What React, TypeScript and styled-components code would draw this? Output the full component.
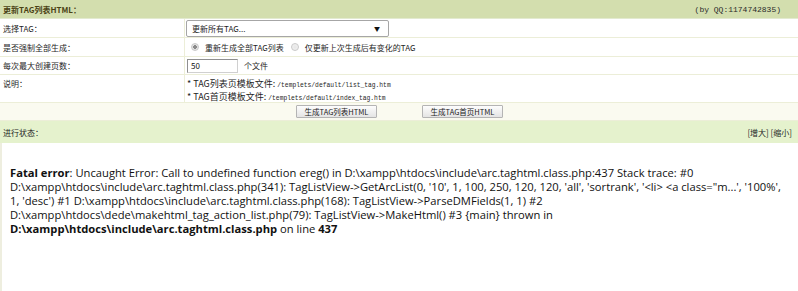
import React from "react";
import styled, { createGlobalStyle } from "styled-components";

const Global = createGlobalStyle`
  html, body { margin: 0; padding: 0; background: #ffffff; }
  body { font-family: "Noto Sans CJK SC", "Noto Sans", sans-serif; font-size: 8px; color: #1e1e1e; }
  * { box-sizing: border-box; }
`;

const Page = styled.div`
  width: 798px;
  height: 291px;
  display: flex;
  flex-direction: column;
  background: #fff;
  overflow: hidden;
`;

const TitleBar = styled.div`
  height: 19px;
  flex: 0 0 19px;
  display: flex;
  align-items: center;
  justify-content: space-between;
  padding: 0 17px 0 3px;
  background: #d3deae;
  border-bottom: 1px solid #e3ead0;
`;

const Title = styled.span`
  font-weight: bold;
  color: #4a4214;
  font-size: 8px;
`;

const Mono = styled.span<{ $size?: number }>`
  font-family: "Liberation Mono", "Noto Sans CJK SC", monospace;
  font-size: ${(p) => p.$size ?? 6.3}px;
`;

const ByLine = styled(Mono)`
  color: #2a2a2a;
`;

const FormRow = styled.div<{ $h: number }>`
  display: grid;
  grid-template-columns: 184px 1fr;
  height: ${(p) => p.$h}px;
  flex: 0 0 ${(p) => p.$h}px;
  border-bottom: 1px solid #eceed8;
`;

const LabelCell = styled.div<{ $top?: boolean }>`
  display: flex;
  align-items: ${(p) => (p.$top ? "flex-start" : "center")};
  padding: ${(p) => (p.$top ? "3px 3px 0" : "0 3px")};
  height: 100%;
`;

const ValueCell = styled.div<{ $top?: boolean }>`
  display: flex;
  flex-direction: ${(p) => (p.$top ? "column" : "row")};
  align-items: ${(p) => (p.$top ? "flex-start" : "center")};
  padding: ${(p) => (p.$top ? "2px 2px 0 2px" : "0 2px 0 1px")};
  height: 100%;
  border-left: 1px solid #eceed8;
`;

const FakeSelect = styled.div`
  width: 203px;
  height: 17px;
  border: 1px solid #a6a6a6;
  border-radius: 2px;
  display: flex;
  align-items: center;
  justify-content: space-between;
  padding: 0 8px 0 5px;
  background: #fff;
`;

const Arrow = styled.span`
  font-size: 6px;
  color: #111;
`;

const RadioGroup = styled.label`
  display: flex;
  align-items: center;
  gap: 6px;
  margin-left: 5px;
  margin-right: 2px;
`;

const Radio = styled.span<{ $checked?: boolean }>`
  width: 8px;
  height: 8px;
  border-radius: 50%;
  border: 1px solid #c9c9c9;
  background: radial-gradient(circle, ${(p) => (p.$checked ? "#8a8a8a 0 1.6px, #e2e2e2 2px" : "#e6e6e6 0, #f4f4f4 100%")});
  display: inline-block;
`;

const NumInput = styled.input`
  width: 51px;
  height: 14px;
  border: 1px solid #8f8f8f;
  border-right-color: #d0d0d0;
  border-bottom-color: #d0d0d0;
  padding: 0 3px;
  font-family: "Noto Sans CJK SC", sans-serif;
  font-size: 8px;
  color: #111;
  margin-left: 1px;
  outline: none;
`;

const Unit = styled.span`
  margin-left: 6px;
  color: #1e1e1e;
`;

const NoteLine = styled.div`
  height: 13px;
  line-height: 13px;
  font-size: 9px;
  color: #1e1e1e;
  white-space: nowrap;
`;

const ButtonRow = styled.div`
  height: 18px;
  flex: 0 0 18px;
  display: flex;
  justify-content: center;
  align-items: center;
  gap: 45px;
  padding-left: 1px;
  background: #fafaf0;
  border-bottom: 1px solid #eceed8;
`;

const Button = styled.button`
  width: 81px;
  height: 13px;
  padding: 0;
  border: 1px solid #b4b4b4;
  border-radius: 1px;
  background: linear-gradient(#fdfdfd, #e4e4e4);
  font-family: "Noto Sans CJK SC", sans-serif;
  font-size: 7.5px;
  color: #222;
  line-height: 11px;
`;

const StatusBar = styled.div`
  height: 22px;
  flex: 0 0 22px;
  display: flex;
  align-items: center;
  justify-content: space-between;
  padding: 0 6px 0 3px;
  background: #e5f2cd;
`;

const Output = styled.div`
  flex: 1;
  border-left: 2px solid #eeeedf;
  padding: 9px 8px;
  font-family: "Open Sans", "Noto Sans", sans-serif;
  font-size: 11.2px;
  line-height: 14px;
  color: #111;
  white-space: nowrap;
`;

export default function App() {
  return (
    <>
      <Global />
      <Page>
        <TitleBar>
          <Title>更新TAG列表HTML：</Title>
          <ByLine $size={8}>(by QQ:1174742835)</ByLine>
        </TitleBar>

        <FormRow $h={19}>
          <LabelCell>选择TAG：</LabelCell>
          <ValueCell>
            <FakeSelect>
              <span>更新所有TAG...</span>
              <Arrow>▼</Arrow>
            </FakeSelect>
          </ValueCell>
        </FormRow>

        <FormRow $h={19}>
          <LabelCell>是否强制全部生成：</LabelCell>
          <ValueCell>
            <RadioGroup>
              <Radio $checked />
              <span>重新生成全部TAG列表</span>
            </RadioGroup>
            <RadioGroup>
              <Radio />
              <span>仅更新上次生成后有变化的TAG</span>
            </RadioGroup>
          </ValueCell>
        </FormRow>

        <FormRow $h={18}>
          <LabelCell>每次最大创建页数：</LabelCell>
          <ValueCell>
            <NumInput defaultValue="50" />
            <Unit>个文件</Unit>
          </ValueCell>
        </FormRow>

        <FormRow $h={28}>
          <LabelCell $top>说明：</LabelCell>
          <ValueCell $top>
            <NoteLine>
              * TAG列表页模板文件: <Mono>/templets/default/list_tag.htm</Mono>
            </NoteLine>
            <NoteLine>
              * TAG首页模板文件: <Mono>/templets/default/index_tag.htm</Mono>
            </NoteLine>
          </ValueCell>
        </FormRow>

        <ButtonRow>
          <Button>生成TAG列表HTML</Button>
          <Button>生成TAG首页HTML</Button>
        </ButtonRow>

        <StatusBar>
          <span>进行状态：</span>
          <span>[增大] [缩小]</span>
        </StatusBar>

        <Output>
          <br />
          <b>Fatal error</b>: Uncaught Error: Call to undefined function ereg() in D:\xampp\htdocs\include\arc.taghtml.class.php:437 Stack trace: #0
          <br />
          D:\xampp\htdocs\include\arc.taghtml.class.php(341): TagListView-&gt;GetArcList(0, '10', 1, 100, 250, 120, 120, 'all', 'sortrank', '&lt;li&gt; &lt;a class="m...', '100%',
          <br />
          1, 'desc') #1 D:\xampp\htdocs\include\arc.taghtml.class.php(168): TagListView-&gt;ParseDMFields(1, 1) #2
          <br />
          D:\xampp\htdocs\dede\makehtml_tag_action_list.php(79): TagListView-&gt;MakeHtml() #3 {"{main}"} thrown in
          <br />
          <b>D:\xampp\htdocs\include\arc.taghtml.class.php</b> on line <b>437</b>
        </Output>
      </Page>
    </>
  );
}
